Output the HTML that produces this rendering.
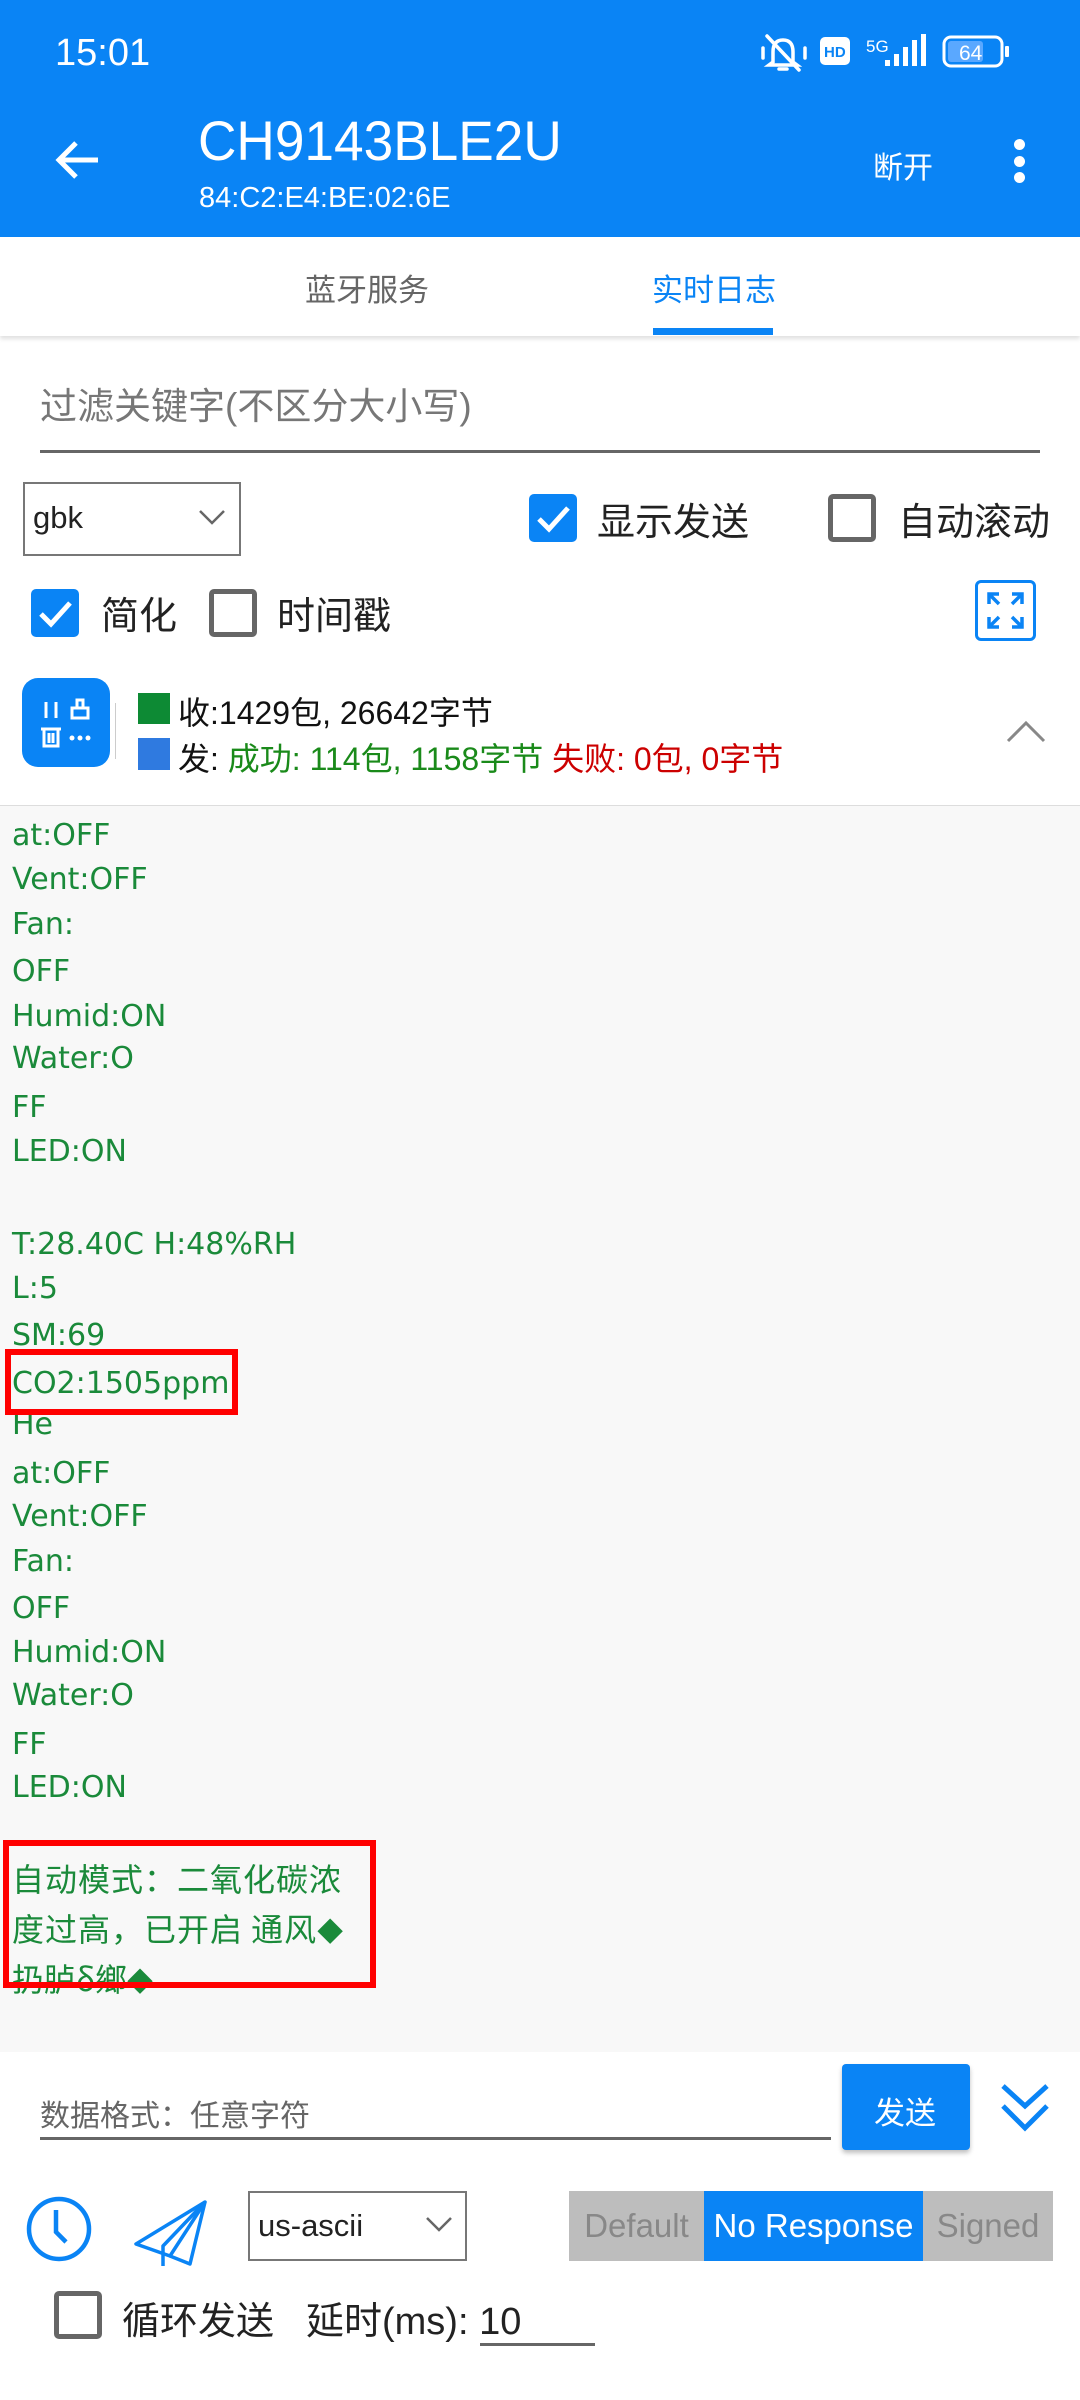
<!DOCTYPE html>
<html><head><meta charset="utf-8"><style>
*{margin:0;padding:0;box-sizing:border-box}
body{width:1080px;height:2400px;position:relative;background:#fff;font-family:"Liberation Sans","Noto Sans CJK SC",sans-serif;overflow:hidden}
.a{position:absolute;white-space:nowrap}
.log{position:absolute;left:12px;font-family:"DejaVu Sans","Noto Sans CJK SC",sans-serif;font-size:30px;color:#1a8a3a;line-height:36px}
.cb{position:absolute;width:48px;height:48px;border:5px solid #666;border-radius:5px;background:#fff}
.cbc{position:absolute;width:48px;height:48px;border-radius:5px;background:#0a84f5}
.t38{font-size:38px;color:#222;font-family:"Liberation Sans","Noto Sans CJK SC",sans-serif}
</style></head><body>
<div class="a" style="left:0;top:0;width:1080px;height:237px;background:#0a84f5"></div>
<div class="a" style="left:55px;top:32px;font-size:38px;color:#fff">15:01</div>
<svg class="a" style="left:755px;top:32px" width="320" height="42" viewBox="0 0 320 42">
<g stroke="#fff" stroke-width="3.5" fill="none" stroke-linecap="round">
<path d="M18 30 L18 20 Q18 8 28 8 Q38 8 38 20 L38 30 L42 33 L14 33 Z"/><path d="M24 37 L32 37"/><path d="M12 4 L44 38"/>
<path d="M8 16 L8 26 M50 16 L50 26"/></g>
<rect x="65" y="5" width="30" height="28" rx="5" fill="#fff"/>
<text x="69" y="25" font-size="15" font-weight="bold" fill="#0a84f5" font-family="Liberation Sans">HD</text>
<text x="111" y="20" font-size="17" fill="#fff" font-family="Liberation Sans">5G</text>
<rect x="130" y="28" width="5" height="6" fill="#fff"/><rect x="139" y="22" width="5" height="12" fill="#fff"/><rect x="148" y="15" width="5" height="19" fill="#fff"/><rect x="157" y="8" width="5" height="26" fill="#fff"/><rect x="166" y="2" width="5" height="32" fill="#fff"/>
<rect x="189" y="5" width="58" height="29" rx="7" stroke="#fff" stroke-width="3" fill="none"/>
<rect x="193" y="9" width="35" height="21" rx="3" fill="#5aa8ff"/>
<rect x="250" y="14" width="4" height="11" rx="1" fill="#fff"/>
<text x="204" y="28" font-size="21" fill="#fff" font-family="Liberation Sans">64</text>
</svg>
<svg class="a" style="left:54px;top:138px" width="48" height="44" viewBox="0 0 48 44"><path d="M44 22 L6 22 M22 5 L5 22 L22 39" stroke="#fff" stroke-width="5" fill="none"/></svg>
<div class="a" style="left:198px;top:108px;font-size:56px;color:#fff;transform:scaleX(0.95);transform-origin:left">CH9143BLE2U</div>
<div class="a" style="left:199px;top:182px;font-size:29px;color:#fff">84:C2:E4:BE:02:6E</div>
<div class="a" style="left:873px;top:143px;font-size:30px;color:#fff">断开</div>
<div class="a" style="left:1014px;top:139px;width:11px;height:11px;border-radius:50%;background:#fff"></div>
<div class="a" style="left:1014px;top:156px;width:11px;height:11px;border-radius:50%;background:#fff"></div>
<div class="a" style="left:1014px;top:172px;width:11px;height:11px;border-radius:50%;background:#fff"></div>
<div class="a" style="left:0;top:237px;width:1080px;height:99px;background:#fff;box-shadow:0 3px 4px rgba(0,0,0,.12)"></div>
<div class="a" style="left:305px;top:265px;font-size:31px;color:#666">蓝牙服务</div>
<div class="a" style="left:652px;top:265px;font-size:31px;color:#0a84f5">实时日志</div>
<div class="a" style="left:653px;top:328px;width:120px;height:7px;background:#0a84f5"></div>
<div class="a" style="left:40px;top:376px;font-size:37px;color:#777">过滤关键字(不区分大小写)</div>
<div class="a" style="left:40px;top:450px;width:1000px;height:3px;background:#666"></div>
<div class="a" style="left:23px;top:482px;width:218px;height:74px;border:2px solid #777"></div>
<div class="a" style="left:33px;top:500px;font-size:31px;color:#222">gbk</div>
<svg class="a" style="left:198px;top:508px" width="28" height="18"><path d="M2 3 L14 15 L26 3" stroke="#666" stroke-width="2.5" fill="none"/></svg>
<div class="cbc" style="left:529px;top:494px"></div>
<svg class="a" style="left:529px;top:494px" width="48" height="48"><path d="M10 25 L20 35 L39 14" stroke="#fff" stroke-width="5" fill="none"/></svg>
<div class="a t38" style="left:597px;top:491px">显示发送</div>
<div class="cb" style="left:828px;top:494px"></div>
<div class="a t38" style="left:898px;top:491px">自动滚动</div>
<div class="cbc" style="left:31px;top:589px"></div>
<svg class="a" style="left:31px;top:589px" width="48" height="48"><path d="M10 25 L20 35 L39 14" stroke="#fff" stroke-width="5" fill="none"/></svg>
<div class="a t38" style="left:101px;top:585px">简化</div>
<div class="cb" style="left:209px;top:589px"></div>
<div class="a t38" style="left:277px;top:585px">时间戳</div>
<div class="a" style="left:975px;top:580px;width:61px;height:61px;border:3px solid #0a84f5;border-radius:6px"></div>
<svg class="a" style="left:975px;top:580px" width="61" height="61"><g stroke="#0a84f5" stroke-width="3.5" fill="none"><path d="M14 24 L14 14 L24 14 M14 14 L24 24"/><path d="M37 14 L47 14 L47 24 M47 14 L37 24"/><path d="M14 37 L14 47 L24 47 M14 47 L24 37"/><path d="M47 37 L47 47 L37 47 M47 47 L37 37"/></g></svg>
<div class="a" style="left:22px;top:678px;width:88px;height:89px;border-radius:16px;background:#0a84f5"></div>
<svg class="a" style="left:22px;top:678px" width="88" height="89"><g stroke="#fff" stroke-width="3" fill="none"><path d="M24 24 L24 40 M34 24 L34 40"/><rect x="50" y="30" width="16" height="10"/><path d="M55 30 L55 22 L61 22 L61 30"/><rect x="22" y="51" width="14" height="17"/><path d="M19 51 L39 51 M27 55 L27 65 M31 55 L31 65"/></g><circle cx="50" cy="60" r="2.5" fill="#fff"/><circle cx="58" cy="60" r="2.5" fill="#fff"/><circle cx="66" cy="60" r="2.5" fill="#fff"/></svg>
<div class="a" style="left:115px;top:703px;width:1px;height:56px;background:#ccc"></div>
<div class="a" style="left:138px;top:693px;width:32px;height:31px;background:#0d8a34"></div>
<div class="a" style="left:138px;top:738px;width:32px;height:32px;background:#2f7ae0"></div>
<div class="a" style="left:178px;top:688px;font-size:32px;color:#111">收:1429包, 26642字节</div>
<div class="a" style="left:178px;top:734px;font-size:32px;color:#111">发: <span style="color:#1a8a1a">成功: 114包, 1158字节</span> <span style="color:#c00">失败: 0包, 0字节</span></div>
<svg class="a" style="left:1005px;top:718px" width="42" height="26"><path d="M3 23 L21 5 L39 23" stroke="#888" stroke-width="3" fill="none"/></svg>
<div class="a" style="left:0;top:805px;width:1080px;height:1247px;background:#f8f8f8;border-top:1px solid #ddd"></div>
<div class="log" style="top:818px">at:OFF</div>
<div class="log" style="top:862px">Vent:OFF</div>
<div class="log" style="top:907px">Fan:</div>
<div class="log" style="top:954px">OFF</div>
<div class="log" style="top:999px">Humid:ON</div>
<div class="log" style="top:1041px">Water:O</div>
<div class="log" style="top:1090px">FF</div>
<div class="log" style="top:1134px">LED:ON</div>
<div class="log" style="top:1227px">T:28.40C H:48%RH</div>
<div class="log" style="top:1271px">L:5</div>
<div class="log" style="top:1318px">SM:69</div>
<div class="log" style="top:1366px">CO2:1505ppm</div>
<div class="log" style="top:1407px">He</div>
<div class="log" style="top:1456px">at:OFF</div>
<div class="log" style="top:1499px">Vent:OFF</div>
<div class="log" style="top:1544px">Fan:</div>
<div class="log" style="top:1591px">OFF</div>
<div class="log" style="top:1635px">Humid:ON</div>
<div class="log" style="top:1678px">Water:O</div>
<div class="log" style="top:1727px">FF</div>
<div class="log" style="top:1770px">LED:ON</div>
<div class="log" style="top:1860px;font-family:'Noto Sans CJK SC',sans-serif;font-size:32px;letter-spacing:1px">自动模式：二氧化碳浓</div>
<div class="log" style="top:1910px;font-family:'Noto Sans CJK SC',sans-serif;font-size:32px;letter-spacing:1px">度过高，已开启 通风<span style="font-size:26px">◆</span></div>
<div class="log" style="top:1960px;font-family:'Noto Sans CJK SC',sans-serif;font-size:32px">扔胪δ鄉<span style="font-size:26px">◆</span></div>
<div class="a" style="left:5px;top:1349px;width:233px;height:66px;border:6px solid #f00"></div>
<div class="a" style="left:3px;top:1840px;width:373px;height:148px;border:6px solid #f00"></div>
<div class="a" style="left:40px;top:2091px;font-size:30px;color:#666">数据格式：任意字符</div>
<div class="a" style="left:40px;top:2137px;width:791px;height:3px;background:#666"></div>
<div class="a" style="left:842px;top:2064px;width:128px;height:86px;border-radius:4px;background:#0a84f5;box-shadow:0 3px 5px rgba(0,0,0,.25)"></div>
<div class="a" style="left:874px;top:2088px;font-size:31px;color:#fff">发送</div>
<svg class="a" style="left:1000px;top:2082px" width="50" height="52"><g stroke="#0a84f5" stroke-width="5" fill="none"><path d="M3 4 L25 24 L47 4"/><path d="M3 24 L25 46 L47 24"/></g></svg>
<svg class="a" style="left:24px;top:2194px" width="70" height="70"><circle cx="35" cy="35" r="30" stroke="#0a84f5" stroke-width="4.5" fill="none"/><path d="M32 16 L32 38 L42 48" stroke="#0a84f5" stroke-width="4.5" fill="none"/></svg>
<svg class="a" style="left:130px;top:2198px" width="80" height="70"><g stroke="#0a84f5" stroke-width="3.5" fill="none" stroke-linejoin="round"><path d="M75 4 L6 46 L40 58 Z"/><path d="M75 4 L33 48 L33 68 M75 4 L60 66 L40 58"/></g></svg>
<div class="a" style="left:248px;top:2191px;width:219px;height:70px;border:2px solid #777"></div>
<div class="a" style="left:258px;top:2208px;font-size:31px;color:#222">us-ascii</div>
<svg class="a" style="left:425px;top:2215px" width="28" height="18"><path d="M2 3 L14 15 L26 3" stroke="#666" stroke-width="2.5" fill="none"/></svg>
<div class="a" style="left:569px;top:2191px;width:135px;height:70px;background:#bdbdbd;color:#888;font-size:33px;text-align:center;line-height:70px">Default</div>
<div class="a" style="left:704px;top:2191px;width:219px;height:70px;background:#0a84f5;color:#fff;font-size:33px;text-align:center;line-height:70px">No Response</div>
<div class="a" style="left:923px;top:2191px;width:130px;height:70px;background:#bdbdbd;color:#888;font-size:33px;text-align:center;line-height:70px">Signed</div>
<div class="cb" style="left:54px;top:2291px"></div>
<div class="a t38" style="left:122px;top:2290px">循环发送</div>
<div class="a t38" style="left:306px;top:2290px">延时(ms): 10</div>
<div class="a" style="left:480px;top:2343px;width:115px;height:3px;background:#666"></div>
</body></html>
